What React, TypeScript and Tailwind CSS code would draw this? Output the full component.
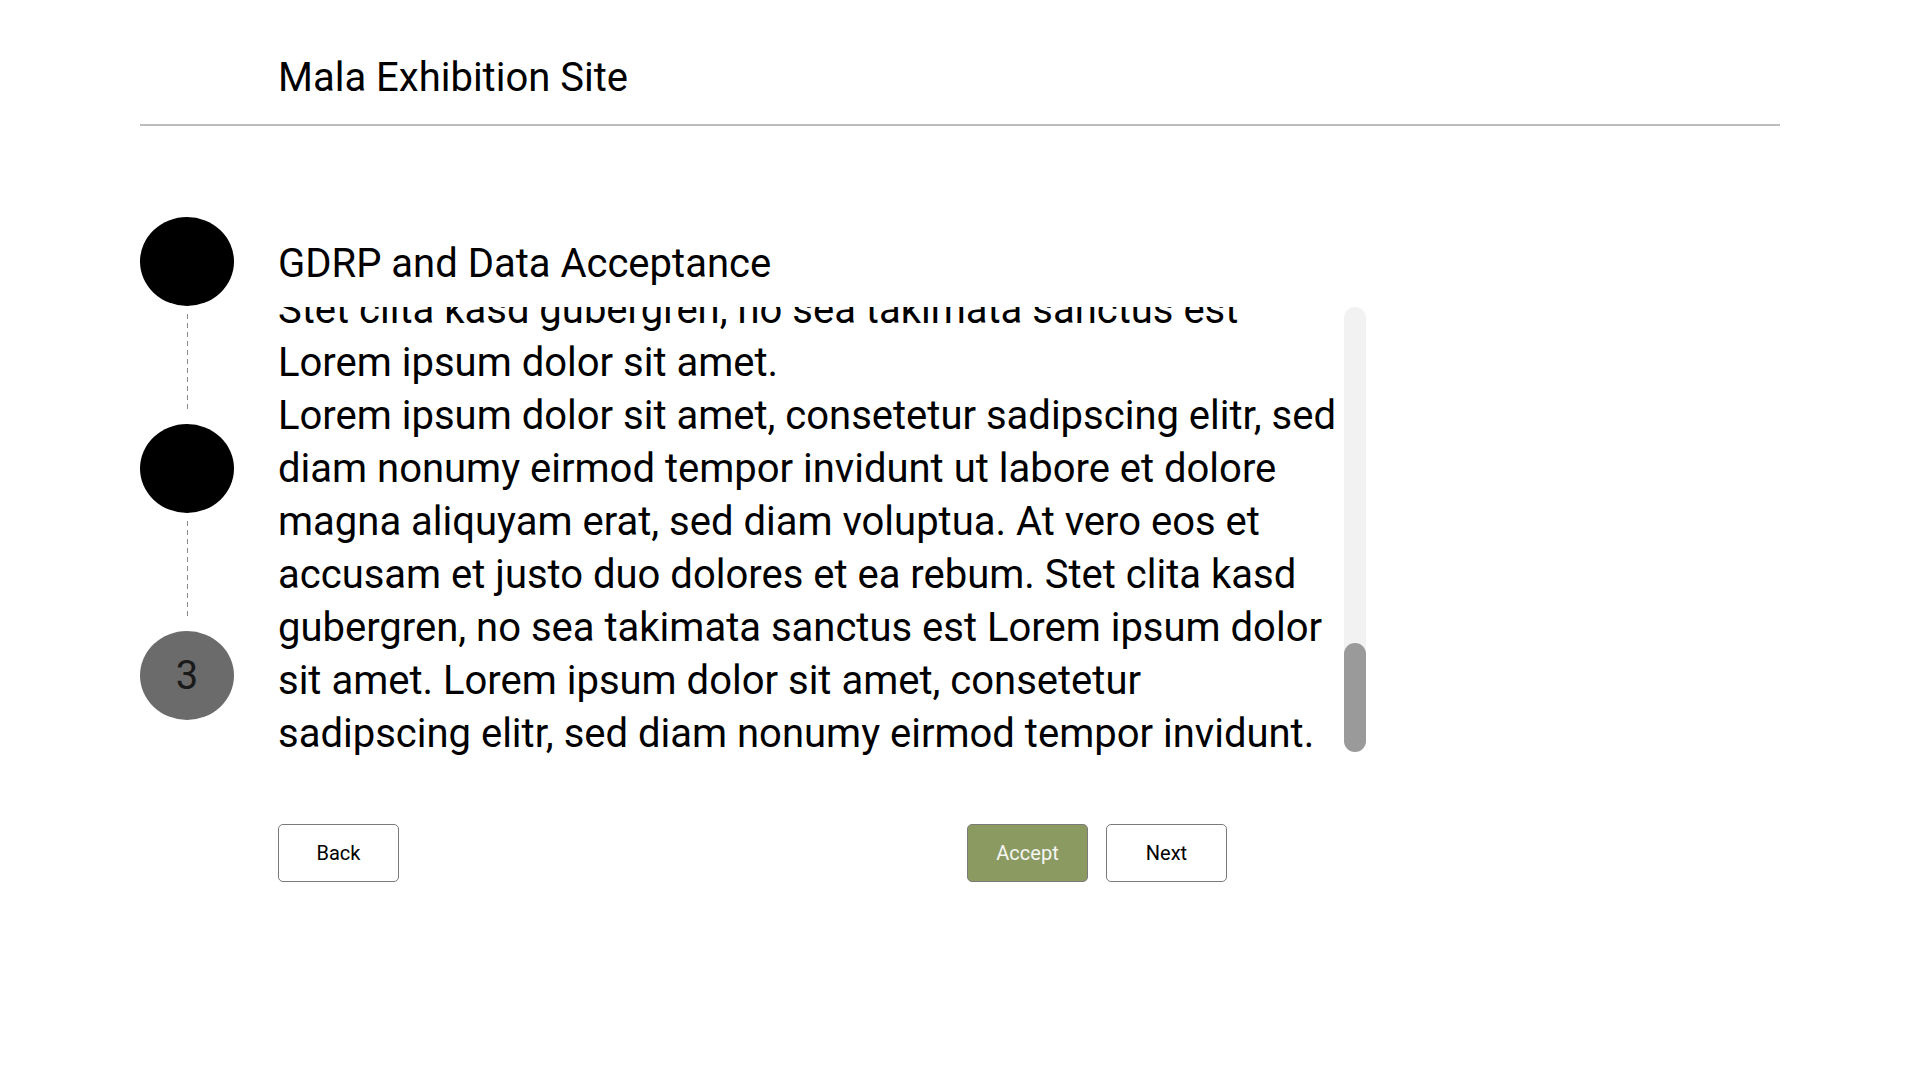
import React from "react";

const LOREM =
  "Lorem ipsum dolor sit amet, consetetur sadipscing elitr, sed diam nonumy eirmod tempor invidunt ut labore et dolore magna aliquyam erat, sed diam voluptua. At vero eos et accusam et justo duo dolores et ea rebum. Stet clita kasd gubergren, no sea takimata sanctus est Lorem ipsum dolor sit amet.";
const STET = "Stet clita kasd gubergren, no sea takimata sanctus est Lorem ipsum dolor sit amet.";
const LAST =
  LOREM + " Lorem ipsum dolor sit amet, consetetur sadipscing elitr, sed diam nonumy eirmod tempor invidunt.";

const paragraphs = [LOREM, LOREM, LOREM, LOREM, STET, STET, LAST];

function Step({ label, muted }: { label?: string; muted?: boolean }) {
  return (
    <div
      className={`w-[94px] h-[89px] rounded-[50%] flex items-center justify-center text-[40px] leading-none text-[#1a1a1a] ${
        muted ? "bg-[#6b6b6b]" : "bg-black"
      }`}
    >
      {label}
    </div>
  );
}

function Connector() {
  return (
    <div className="h-[118px] flex justify-center pt-[8px]">
      <div className="w-px h-[96px] bg-[repeating-linear-gradient(to_bottom,#8a8a8a_0_5px,transparent_5px_9px)]" />
    </div>
  );
}

export default function App() {
  return (
    <div className="min-h-screen bg-white text-black font-['Roboto',sans-serif]">
      <div className="mx-auto w-[1640px]">
        {/* Header */}
        <header className="pt-[54px] pb-[23px] pl-[138px] border-b-2 border-[#bcbcbc]">
          <h1 className="text-[40px] leading-[47px] font-normal">Mala Exhibition Site</h1>
        </header>

        {/* Stepper + content */}
        <div className="flex gap-[44px] mt-[91px]">
          <div className="flex flex-col w-[94px]">
            <Step />
            <Connector />
            <Step />
            <Connector />
            <Step label="3" muted />
          </div>

          <div className="flex flex-col">
            <h2 className="h-[90px] pt-[23px] text-[40px] leading-[47px] font-normal">
              GDRP and Data Acceptance
            </h2>

            {/* Scrolled text box, shown at its end */}
            <div className="flex items-start">
              <div className="w-[1066px] h-[453px] pr-[6px] overflow-hidden flex flex-col justify-end text-[40px] leading-[53px]">
                {paragraphs.map((p, i) => (
                  <p key={i} className="shrink-0">
                    {p}
                  </p>
                ))}
              </div>
              <div className="w-[22px] h-[445px] rounded-full bg-[#f2f2f2] flex flex-col justify-end">
                <div className="h-[109px] rounded-full bg-[#9a9a9a]" />
              </div>
            </div>

            <div className="w-[949px] mt-[64px] flex justify-between">
              <button className="w-[121px] h-[58px] rounded-[5px] border border-[#7a7a7a] bg-white text-[20px]">
                Back
              </button>
              <div className="flex gap-[18px]">
                <button className="w-[121px] h-[58px] rounded-[5px] border border-[#7a7a7a] bg-[#8b9a61] text-[#f5f5f5] text-[20px]">
                  Accept
                </button>
                <button className="w-[121px] h-[58px] rounded-[5px] border border-[#7a7a7a] bg-white text-[20px]">
                  Next
                </button>
              </div>
            </div>
          </div>
        </div>
      </div>
    </div>
  );
}
